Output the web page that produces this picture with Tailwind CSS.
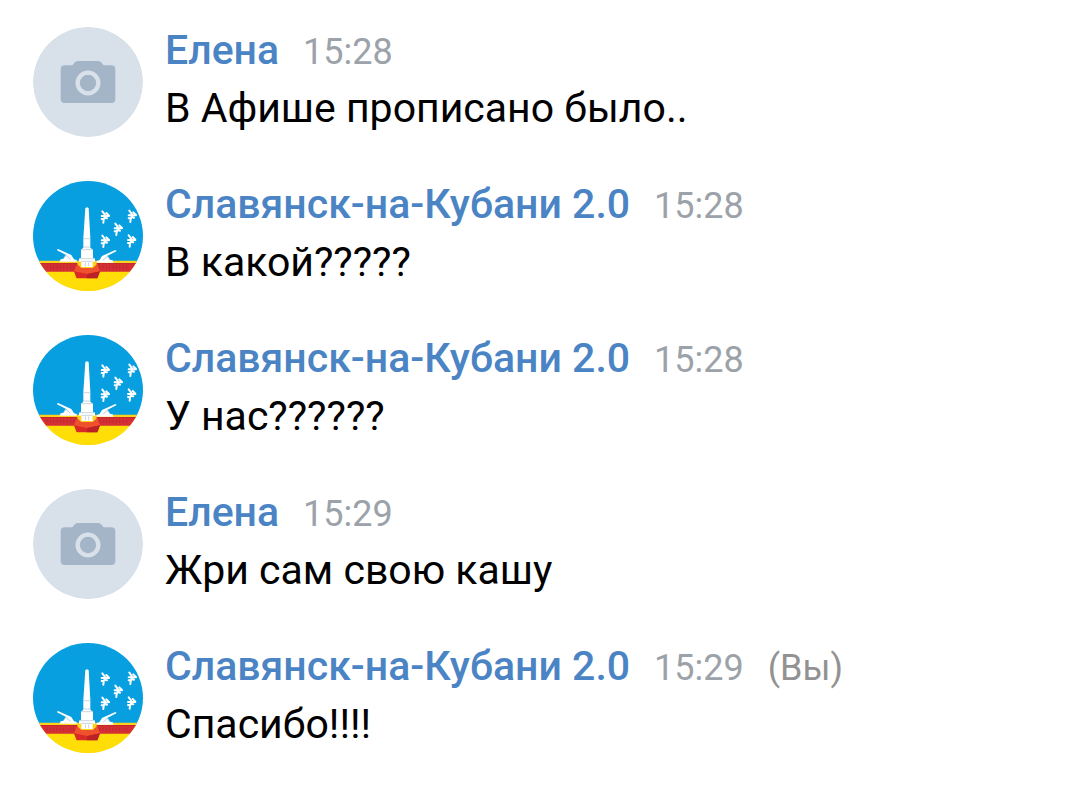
<!DOCTYPE html>
<html lang="ru">
<head>
<meta charset="utf-8">
<meta name="viewport" content="width=device-width, initial-scale=1">
<title>Сообщения</title>
<script src="https://cdn.jsdelivr.net/npm/@tailwindcss/browser@4"></script>
</head>
<body class="bg-white font-[Roboto,sans-serif] text-black">
<svg class="absolute size-0" aria-hidden="true">
  <symbol id="camera" viewBox="27 27 330 330">
    <circle cx="192" cy="192" r="165" fill="#d8e1e9"/>
    <path d="M122 142h20c7 0 8-13 20-13h60c12 0 13 13 20 13h20q12 0 12 12v89q0 12-12 12H122q-12 0-12-12v-89q0-12 12-12Z" fill="#a4b5c8"/>
    <circle cx="192" cy="195" r="31" fill="#a4b5c8" stroke="#d8e1e9" stroke-width="13"/>
  </symbol>
  <symbol id="city" viewBox="15 15 330 330">
    <path fill="#079fdf" d="M0 0h360v260H0z"/>
    <path fill="#fbd21c" d="M0 254h360v106H0z"/>
    <path fill="#ffde08" d="M0 287h360v73H0z"/>
    <path fill="#d62f33" d="M0 261h360v26H0z"/>
    <path fill="none" stroke="#b8262c" stroke-width="2" d="M0 263h360"/>
    <path fill="none" stroke="#a82a34" stroke-width="9" stroke-dasharray="2 8" d="M56 274h85m73 0h90"/>
    <g id="cannon">
      <path fill="#fff" d="m87 221 3-2 40 18 8 13 8 2v5H95l3-7 8-2 7-12-26-13Z"/>
      <path fill="none" stroke="#8fb3c7" stroke-width="2" d="m112 236 15 14m-21-2 8-10"/>
    </g>
    <use href="#cannon" transform="matrix(-1 0 0 1 352 3)"/>
    <path fill="#fbd21c" d="M148 257h58v22h-58z"/>
    <path fill="#f0512d" d="m147 264 13 12h34l14-12 8 22-9 20h-61l-8-20Z"/>
    <path fill="#d92a26" d="m138 286 40 8 38-8-8 21h-62Z"/>
    <path fill="#bb2228" d="m178 294 38-8-8 21h-32Z"/>
    <path fill="#fff" d="m172 96 5-2 5 2 5 89v30l8 6v24l6 3v9h-7v16h-34v-16h-7v-9l6-3v-24l7-6v-30Z"/>
    <path fill="none" stroke="#aebfc8" stroke-width="2" d="M166 188h21m-21 25h21m-28 8h36m-42 27h48m-41 8h34m-22 3v12m10-12v12"/>
    <path id="bird" fill="none" stroke="#fff" stroke-width="6" stroke-linecap="round" stroke-linejoin="round" d="m223 106 6 8 4 7m2-10 8 8m-22 1h22m-12 1-3 8h-7m6 2-1 9m4-15 7 2"/>
    <use href="#bird" x="81" y="-2"/>
    <use href="#bird" x="39" y="37"/>
    <use href="#bird" y="73"/>
    <use href="#bird" x="79" y="72"/>
  </symbol>
</svg>
<main class="flex flex-col gap-[38px] px-[33px] pt-[21px] pb-[38px]">
  <article class="flex items-start gap-[22px]">
    <svg class="mt-[6px] size-[110px] shrink-0 rounded-full" role="img" aria-label="Елена"><use href="#camera"/></svg>
    <div class="min-w-0 text-[41px] leading-[58px]">
      <header class="flex h-[58px] items-baseline gap-6"><a href="#" class="font-medium text-[#4b84c4]">Елена</a><time class="text-4xl/[58px] text-[#9ca2a9]">15:28</time></header>
      <p>В Афише прописано было..</p>
    </div>
  </article>
  <article class="flex items-start gap-[22px]">
    <svg class="mt-[6px] size-[110px] shrink-0 rounded-full" role="img" aria-label="Славянск-на-Кубани 2.0"><use href="#city"/></svg>
    <div class="min-w-0 text-[41px] leading-[58px]">
      <header class="flex h-[58px] items-baseline gap-6"><a href="#" class="font-medium text-[#4b84c4]">Славянск-на-Кубани 2.0</a><time class="text-4xl/[58px] text-[#9ca2a9]">15:28</time></header>
      <p>В какой?????</p>
    </div>
  </article>
  <article class="flex items-start gap-[22px]">
    <svg class="mt-[6px] size-[110px] shrink-0 rounded-full" role="img" aria-label="Славянск-на-Кубани 2.0"><use href="#city"/></svg>
    <div class="min-w-0 text-[41px] leading-[58px]">
      <header class="flex h-[58px] items-baseline gap-6"><a href="#" class="font-medium text-[#4b84c4]">Славянск-на-Кубани 2.0</a><time class="text-4xl/[58px] text-[#9ca2a9]">15:28</time></header>
      <p>У нас??????</p>
    </div>
  </article>
  <article class="flex items-start gap-[22px]">
    <svg class="mt-[6px] size-[110px] shrink-0 rounded-full" role="img" aria-label="Елена"><use href="#camera"/></svg>
    <div class="min-w-0 text-[41px] leading-[58px]">
      <header class="flex h-[58px] items-baseline gap-6"><a href="#" class="font-medium text-[#4b84c4]">Елена</a><time class="text-4xl/[58px] text-[#9ca2a9]">15:29</time></header>
      <p>Жри сам свою кашу</p>
    </div>
  </article>
  <article class="flex items-start gap-[22px]">
    <svg class="mt-[6px] size-[110px] shrink-0 rounded-full" role="img" aria-label="Славянск-на-Кубани 2.0"><use href="#city"/></svg>
    <div class="min-w-0 text-[41px] leading-[58px]">
      <header class="flex h-[58px] items-baseline gap-6"><a href="#" class="font-medium text-[#4b84c4]">Славянск-на-Кубани 2.0</a><time class="text-4xl/[58px] text-[#9ca2a9]">15:29</time><span class="text-4xl/[58px] text-[#929292]">(Вы)</span></header>
      <p>Спасибо!!!!</p>
    </div>
  </article>
</main>
</body>
</html>
